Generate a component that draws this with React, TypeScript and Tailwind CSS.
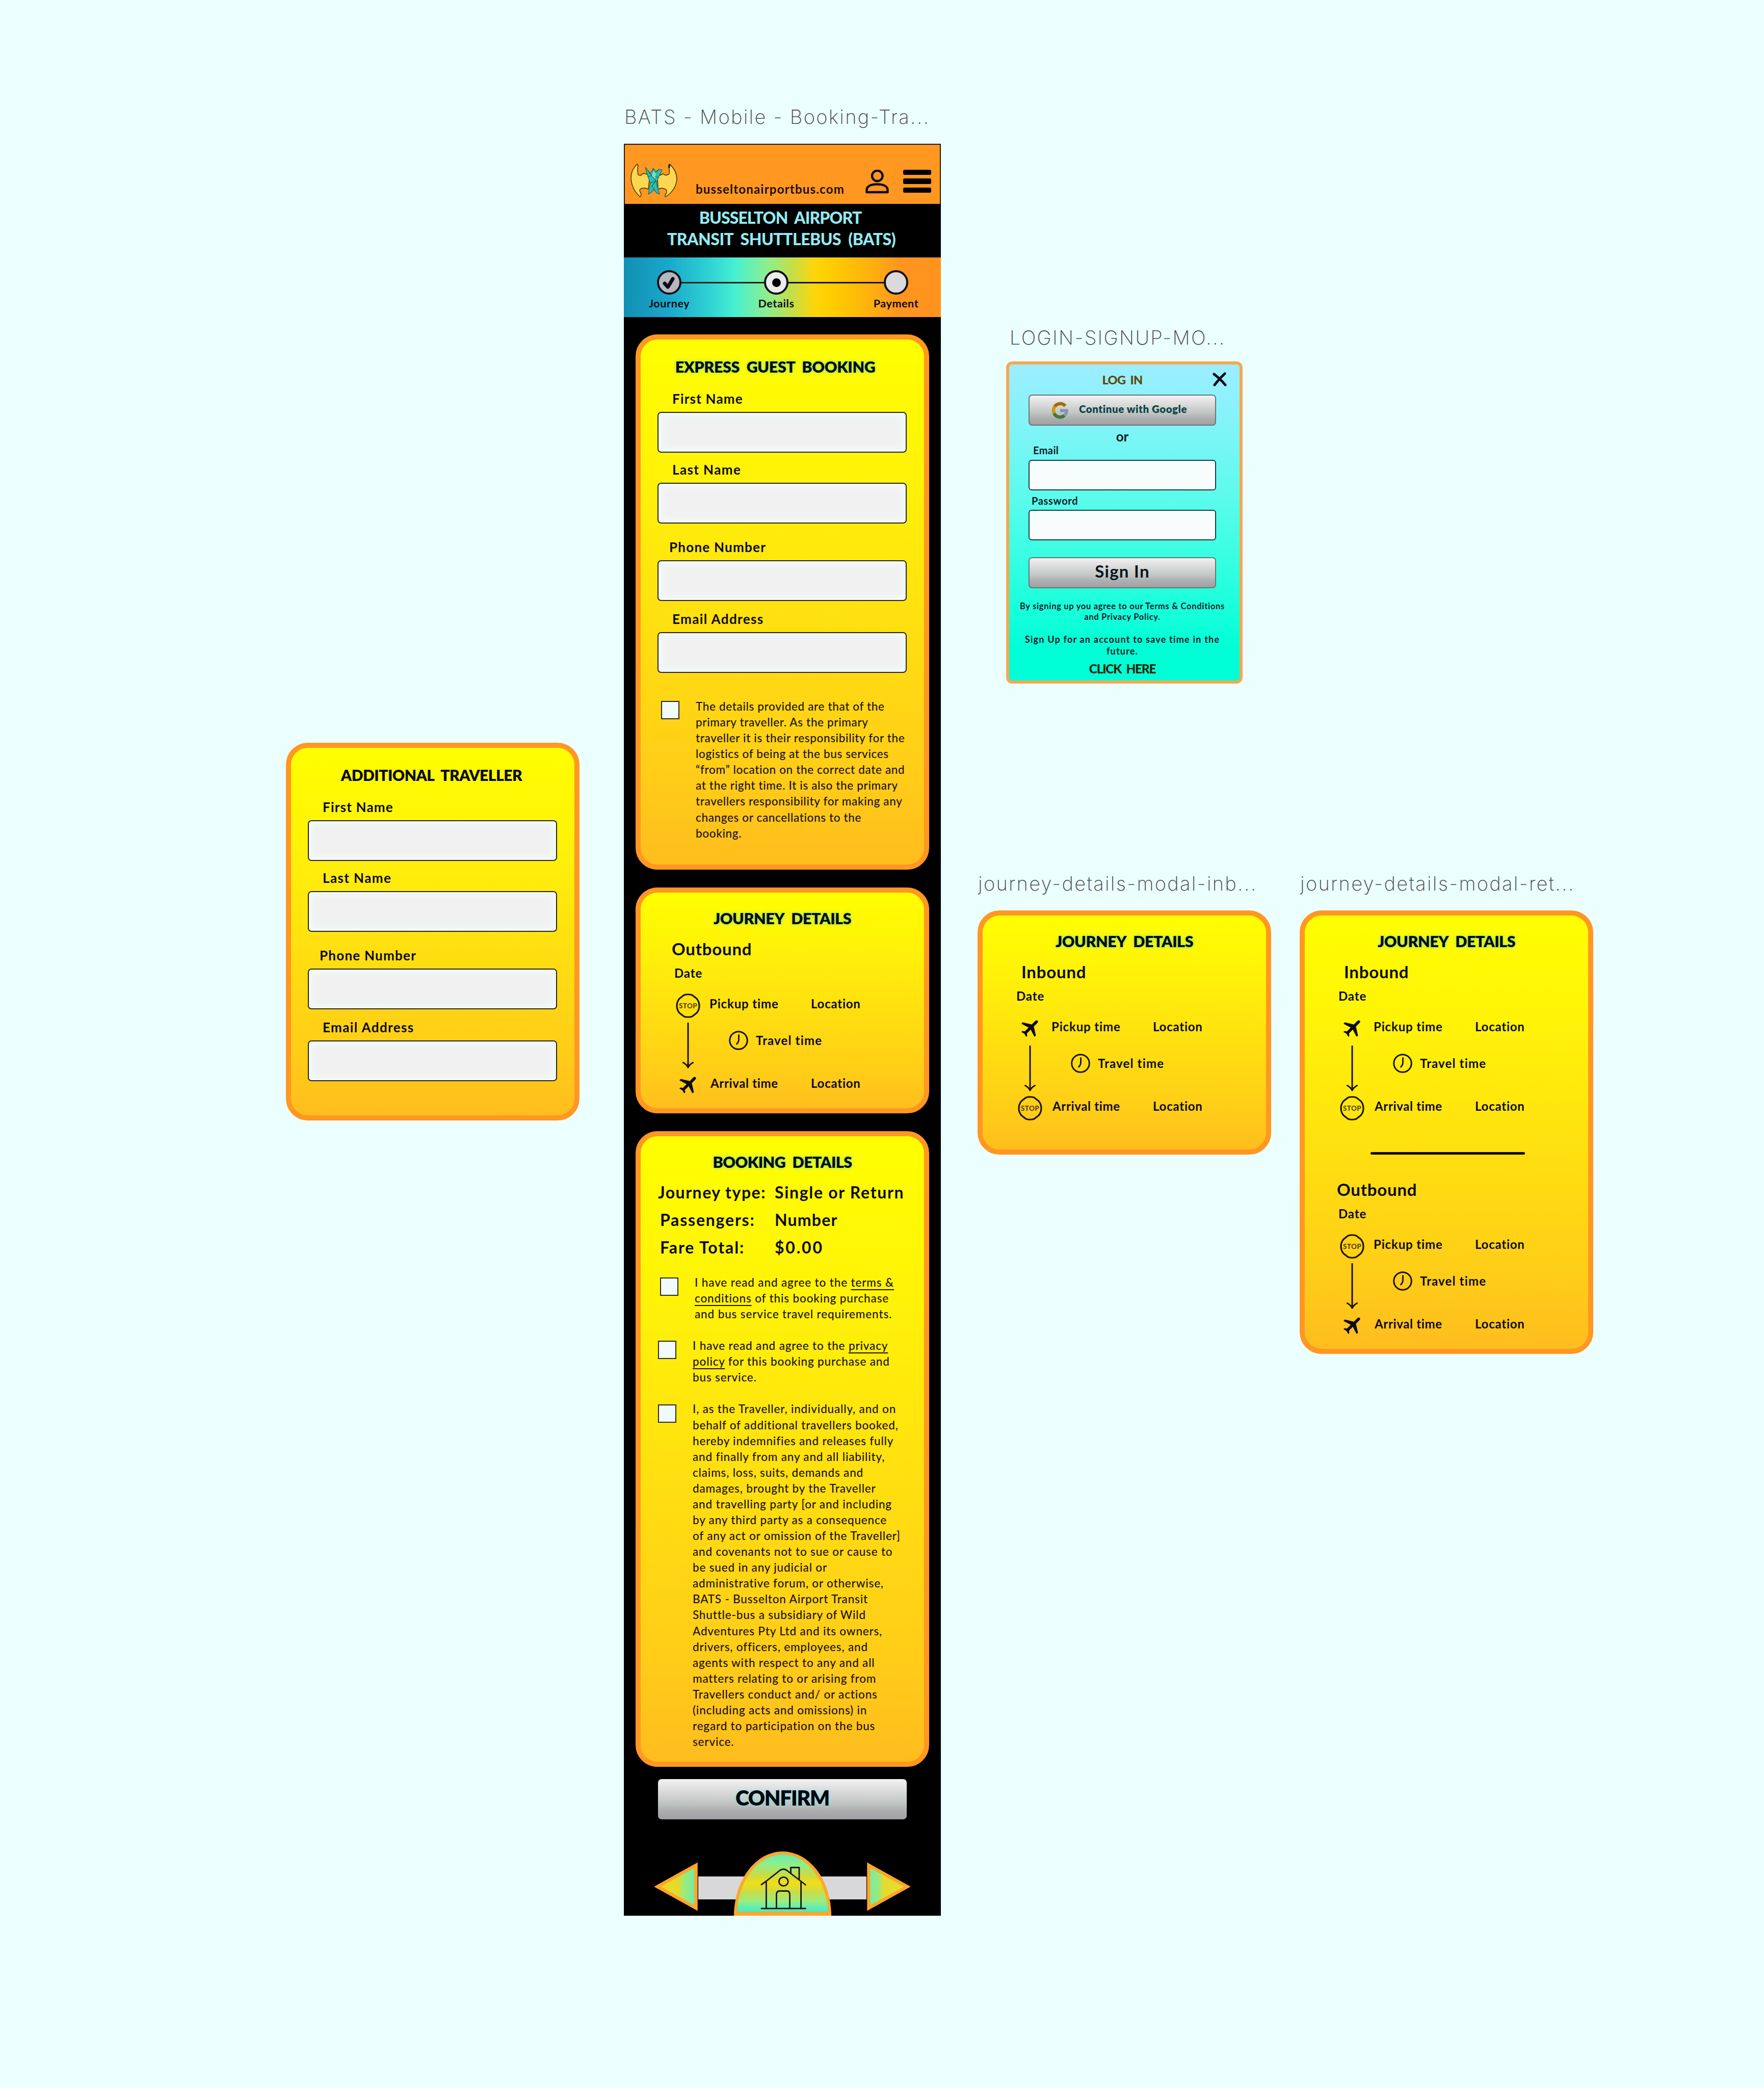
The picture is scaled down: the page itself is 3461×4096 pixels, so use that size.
import type { ReactNode } from "react";

const glow = "[text-shadow:0_0_6px_rgba(60,225,190,0.75)]";

function ArtboardLabel({ className, children }: { className: string; children: ReactNode }) {
  return (
    <div
      className={`absolute whitespace-nowrap font-['Inter',sans-serif] text-[38px] font-extralight leading-[46px] tracking-[2.3px] text-[#4a4a4a] ${className}`}
    >
      {children}
    </div>
  );
}

function YellowCard({ className, children }: { className: string; children: ReactNode }) {
  return (
    <section
      className={`flex w-[576px] flex-col rounded-[43px] border-[10px] border-[#ff9722] bg-[linear-gradient(180deg,#ffff00_0%,#fff308_25%,#ffdf10_55%,#ffcd18_82%,#ffbc1e_100%)] bg-origin-border text-[#0d0a12] ${className}`}
    >
      {children}
    </section>
  );
}

function Field({ label, className, labelClass }: { label: string; className: string; labelClass: string }) {
  return (
    <label className={`flex flex-col ${className}`}>
      <span className={`block h-[30px] whitespace-nowrap text-[26px] font-bold leading-[30px] ${labelClass}`}>{label}</span>
      <span className="mt-[11px] block h-[80px] w-[489px] rounded-[7px] border-2 border-[#2a2420] bg-[#f1f1f1] shadow-[inset_0_0_14px_5px_#f1fdfb]" />
    </label>
  );
}

function TravellerFields() {
  return (
    <div className="mt-[28px] flex flex-col pl-[33px]">
      <Field label="First Name" className="" labelClass="pl-[29px] tracking-[1.2px]" />
      <Field label="Last Name" className="mt-[18px]" labelClass="pl-[29px] tracking-[1.4px]" />
      <Field label="Phone Number" className="mt-[31px]" labelClass="pl-[23px] tracking-[1.25px]" />
      <Field label="Email Address" className="mt-[20px]" labelClass="pl-[29px] tracking-[1.4px]" />
    </div>
  );
}

function Consent({ className, boxClass, textClass, children }: { className: string; boxClass: string; textClass: string; children: ReactNode }) {
  return (
    <div className={`flex items-start ${className}`}>
      <span className={`block size-[36px] shrink-0 border-2 border-[#2a2a2a] bg-[#f0fbfa] ${boxClass}`} />
      <p className={`whitespace-nowrap text-[22.5px] font-medium leading-[31.08px] text-[#1c1206] ${textClass}`}>{children}</p>
    </div>
  );
}

function Lines({ items }: { items: string[] }) {
  return (
    <>
      {items.map((line) => (
        <span key={line} className="block">{line}</span>
      ))}
    </>
  );
}

function StopIcon() {
  return (
    <svg viewBox="0 0 48 48" className="size-[48px]">
      <path d="M16 3 Q24 0.5 32 3 L41 10 Q46 16 46 24 Q46 32 41 38 L32 45 Q24 47.5 16 45 L7 38 Q2 32 2 24 Q2 16 7 10 Z" fill="none" stroke="#1c1408" strokeWidth="3.2" strokeLinejoin="round" />
      <text x="24" y="28.5" textAnchor="middle" fontFamily="Lato, sans-serif" fontWeight="700" fontSize="13.5" letterSpacing="0.4" fill="#4a3404">STOP</text>
    </svg>
  );
}

function PlaneIcon() {
  return (
    <svg viewBox="0 0 24 24" className="size-[46px]">
      <path transform="translate(1 -0.8) rotate(45 12 12)" fill="#0d0a12" d="M21 16v-2l-8-5V3.5c0-.83-.67-1.5-1.5-1.5S10 2.67 10 3.5V9l-8 5v2l8-2.5V19l-2 1.5V22l3.5-1 3.5 1v-1.5L13 19v-5.5l8 2.5z" />
    </svg>
  );
}

function ClockIcon() {
  return (
    <svg viewBox="0 0 38 38" className="-my-[5px] size-[38px]">
      <circle cx="19" cy="19" r="17.3" fill="none" stroke="#1a1208" strokeWidth="3" />
      <path d="M19.5 8.5 V17 Q19.5 22 15.5 26" fill="none" stroke="#1a1208" strokeWidth="2.8" strokeLinecap="round" />
    </svg>
  );
}

function Leg({ direction, headingClass }: { direction: "Inbound" | "Outbound"; headingClass: string }) {
  const inbound = direction === "Inbound";
  return (
    <div className="flex flex-col">
      <h3 className={`h-[38px] text-[33px] font-bold leading-[38px] tracking-[0.8px] ${headingClass}`}>{direction}</h3>
      <p className="mt-[15px] h-[28px] pl-[66px] text-[24px] font-bold leading-[28px] tracking-[0.9px]">Date</p>
      <div className="mt-[26px] flex h-[204px] pl-[69px]">
        <div className="flex w-[48px] flex-col items-center">
          <div className="flex size-[48px] items-center justify-center">{inbound ? <PlaneIcon /> : <StopIcon />}</div>
          <svg viewBox="0 0 22 90" className="my-[9px] h-[90px] w-[22px]">
            <path d="M11 1 V88 M1.5 78.5 Q8 82 11 88 Q14 82 20.5 78.5" fill="none" stroke="#1a1208" strokeWidth="3" strokeLinecap="round" strokeLinejoin="round" />
          </svg>
          <div className="flex size-[48px] items-center justify-center">{inbound ? <StopIcon /> : <PlaneIcon />}</div>
        </div>
        <div className="flex flex-col pl-[18px] pt-[6px] text-[24px] font-bold leading-[28px]">
          <div className="flex">
            <span className="w-[199px] tracking-[0.85px]">Pickup time</span>
            <span className="tracking-[0.75px]">Location</span>
          </div>
          <div className="mt-[43.5px] flex h-[28px] items-center pl-[38px]">
            <ClockIcon />
            <span className="pl-[15px] tracking-[1.15px]">Travel time</span>
          </div>
          <div className="mt-[56px] flex pl-[2px]">
            <span className="w-[197px] tracking-[0.65px]">Arrival time</span>
            <span className="tracking-[0.75px]">Location</span>
          </div>
        </div>
      </div>
    </div>
  );
}

function CardTitle({ children, className }: { children: ReactNode; className: string }) {
  return <h2 className={`h-[40px] whitespace-nowrap text-center font-extrabold leading-[41px] ${className}`}>{children}</h2>;
}

function JourneyTitle() {
  return <CardTitle className={`mb-[21px] text-[30.5px] tracking-[-0.5px] [word-spacing:8px] ${glow}`}>JOURNEY DETAILS</CardTitle>;
}

function BatLogo() {
  return (
    <svg viewBox="0 0 92 66" className="mt-[37px] h-[66px] w-[92px]">
      <g stroke="#3a2808" strokeWidth="1.4" strokeLinejoin="round">
        <path fill="#fbd850" d="M13 1 Q1 12 1 29 Q3 52 19 65 Q22 63 20 57 Q17 54 19 50 Q26 46 35 50 L38 24 Q32 20 25 19 Q20 25 15 22 Q13 12 15 4 Z" />
        <path fill="#fbd850" d="M77 1 Q91 14 91 31 Q89 52 69 65 Q66 63 70 59 Q72 54 70 51 Q63 46 54 50 L53 26 Q58 22 64 20 Q70 25 76 20 Q77 12 75 6 Z" />
      </g>
      <path fill="#2cc0b0" stroke="#17696c" strokeWidth="1.2" strokeLinejoin="round" d="M29 7 L35 14 L38 20 L45 9 L50 16 L56 11 L62 12 L55 27 L51 38 L57 60 L52 58 L46 51 L40 57 L35 60 L37 50 L39 38 L34 25 Z" />
      <path fill="none" stroke="#135d66" strokeWidth="1.2" d="M45 10 L42 24 L50 34 L42 44 L47 51 M34 25 L42 24 L55 27 M39 38 L50 34 M35 14 L42 24 L56 11" />
      <path fill="#7fe0b8" d="M44 14 L42 24 L48 30 L50 19 Z" />
      <path fill="#1a1208" d="M75 1 L78 2 L77 9 L74 8 Z" />
    </svg>
  );
}

function Step({ label, tracking, fill, children }: { label: string; tracking: string; fill: string; children?: ReactNode }) {
  return (
    <div className="flex w-[100px] flex-col items-center pt-[25px]">
      <div className={`flex size-[48px] items-center justify-center rounded-full border-4 border-[#12101a] ${fill}`}>{children}</div>
      <span className={`mt-[4px] text-[21.5px] font-bold leading-[26px] text-[#0d0a12] ${tracking}`}>{label}</span>
    </div>
  );
}

function GoogleIcon() {
  return (
    <svg viewBox="0 0 34 34" className="size-[34px]" fill="none" strokeWidth="6.5">
      <path d="M27 8.5 A13 13 0 0 0 6 10" stroke="#a8690c" />
      <path d="M6.6 9.2 A13 13 0 0 0 5.6 23.5" stroke="#d2940f" />
      <path d="M5.2 22.8 A13 13 0 0 0 25.5 27" stroke="#3f7a3c" />
      <path d="M25 27.4 A13 13 0 0 0 29.8 17.5 H17" stroke="#7f97b0" strokeWidth="6" />
    </svg>
  );
}

function LoginInput() {
  return <span className="mx-[38px] block h-[60px] rounded-[6px] border-2 border-[#1f3c40] bg-[#f8fcfc] shadow-[inset_0_0_12px_4px_#f0ffff]" />;
}

const silver = "bg-[linear-gradient(180deg,#f3f2f3_0%,#d9d9d9_32%,#c2c7c4_58%,#aeafaf_78%,#a09fa4_100%)]";

function LoginModal() {
  return (
    <section className="absolute left-[1974px] top-[709px] flex h-[632px] w-[464px] flex-col rounded-[12px] border-[6px] border-[#f6a850] bg-[linear-gradient(180deg,#9ceeff_0%,#80f4f8_20%,#5cfbec_42%,#30ffe0_65%,#00ffd6_90%,#00ffd4_100%)] pr-[8px] text-[#0b1a24]">
      <svg viewBox="0 0 28 28" className="absolute left-[399px] top-[15px] size-[28px]">
        <path d="M3 4 Q14 12 25 25 M24 3 Q13 13 4 25" fill="none" stroke="#0d0a18" strokeWidth="5" strokeLinecap="round" />
      </svg>
      <h2 className="mt-[14px] h-[30px] text-center text-[23.5px] font-black leading-[32px] tracking-[-0.6px] text-[#5f4708] [word-spacing:4px]">LOG IN</h2>
      <div className={`mx-[38px] mt-[15px] flex h-[61px] items-center rounded-[7px] border-2 border-[#6c7476] pl-[43px] ${silver}`}>
        <GoogleIcon />
        <span className="-mt-[5px] whitespace-nowrap pl-[20px] text-[20.5px] font-extrabold leading-[30px] tracking-[0.55px] text-[#0b4448]">Continue with Google</span>
      </div>
      <p className="mt-[6px] h-[30px] text-center text-[26px] font-bold leading-[30px]">or</p>
      <p className="h-[24px] pl-[47px] text-[20px] font-bold leading-[24px] tracking-[0.4px]">Email</p>
      <span className="h-[7px]" />
      <LoginInput />
      <p className="mt-[8px] h-[24px] pl-[44px] text-[20px] font-bold leading-[24px] tracking-[0.7px]">Password</p>
      <span className="h-[6px]" />
      <LoginInput />
      <div className={`mx-[38px] mt-[33px] flex h-[61px] justify-center rounded-[7px] border-2 border-[#6c7476] text-[33px] font-bold leading-[51px] tracking-[1.3px] text-[#06161c] ${silver}`}>Sign In</div>
      <p className="mt-[25px] whitespace-nowrap text-center text-[16.5px] font-bold leading-[21.4px] tracking-[0.7px]">
        By signing up you agree to our Terms &amp; Conditions
        <br />
        and Privacy Policy.
      </p>
      <p className="mt-[21px] whitespace-nowrap text-center text-[18px] font-bold leading-[23px] tracking-[1.2px]">
        Sign Up for an account to save time in the
        <br />
        future.
      </p>
      <p className="mt-[8px] text-center text-[24.5px] font-black leading-[30px] tracking-[-1.3px] text-[#1c2408] [word-spacing:5px]">CLICK HERE</p>
    </section>
  );
}

function BottomNav() {
  return (
    <nav className="relative mt-auto flex h-[126px] items-start px-[60px] pt-[20px]">
      <svg viewBox="0 0 86 98" className="h-[98px] w-[86px] shrink-0">
        <defs>
          <linearGradient id="navLeft">
            <stop offset="0" stopColor="#b8e070" />
            <stop offset="0.15" stopColor="#f2da1c" />
            <stop offset="0.58" stopColor="#dcdc34" />
            <stop offset="0.64" stopColor="#a6ea70" />
            <stop offset="1" stopColor="#6ceaa8" />
          </linearGradient>
        </defs>
        <path d="M81.5 7 V91 L6 49 Z" fill="url(#navLeft)" stroke="#fda628" strokeWidth="6.5" />
      </svg>
      <span className="mt-[29px] h-[45px] flex-1 bg-[#d8d7da]" />
      <svg viewBox="0 0 86 98" className="h-[98px] w-[86px] shrink-0">
        <defs>
          <linearGradient id="navRight">
            <stop offset="0" stopColor="#72ecaa" />
            <stop offset="0.25" stopColor="#98ea7c" />
            <stop offset="0.4" stopColor="#e6da2c" />
            <stop offset="1" stopColor="#e6dc38" />
          </linearGradient>
        </defs>
        <path d="M4.5 7 V91 L80 49 Z" fill="url(#navRight)" stroke="#fda628" strokeWidth="6.5" />
      </svg>
      <div className="absolute left-[216px] top-0 flex h-[126px] w-[191px] justify-center rounded-[50%_50%_0_0/100%_100%_0_0] border-[6px] border-b-[8px] border-[#fda72c] bg-[linear-gradient(180deg,#66eeb0_0%,#90ee88_18%,#c6dc4a_35%,#f2dd16_50%,#c8dc4a_66%,#98ee80_82%,#44eccc_99%)]">
        <svg viewBox="-2 -2 91 86" className="ml-[4px] mt-[23px] h-[86px] w-[91px]" fill="none" stroke="#15160e" strokeWidth="2.8" strokeLinecap="round" strokeLinejoin="round">
          <path d="M0 34 L9 27.5 L37 5.5 Q43 2 49 5.5 L77.5 27.5 L86.5 34.5" />
          <path d="M9.4 28.5 V80.5 M77.6 28.5 V80.5 M0 80.8 H86.5" />
          <path d="M57.5 12 V0.5 H74 V24" />
          <ellipse cx="43.3" cy="28" rx="9" ry="8.6" />
          <path d="M29.4 80 V54 Q29.4 46.5 35 46.5 H50 Q55.5 46.5 55.5 54 V80" />
        </svg>
      </div>
    </nav>
  );
}

function SummaryRow({ label, value, className, labelClass, valueClass }: { label: string; value: string; className: string; labelClass: string; valueClass: string }) {
  return (
    <div className={`flex h-[36px] whitespace-nowrap text-[32px] font-bold leading-[36px] ${className}`}>
      <span className={labelClass}>{label}</span>
      <span className={valueClass}>{value}</span>
    </div>
  );
}

function BookingArtboard() {
  return (
    <main className="absolute left-[1224px] top-[282px] flex h-[3476px] w-[622px] flex-col bg-black">
      <header className="flex h-[118px] items-start border-2 border-b-0 border-[#2a1804] bg-[#ff9720] pl-[11px]">
        <BatLogo />
        <span className="ml-[36px] mt-[73px] w-[333px] whitespace-nowrap text-[24px] font-bold leading-[28px] tracking-[1.2px] text-[#1a0f06]">busseltonairportbus.com</span>
        <svg viewBox="0 0 46 47" className="mt-[49px] h-[47px] w-[46px]" fill="none" stroke="#0d0a12" strokeWidth="4.4" strokeLinejoin="round">
          <circle cx="23.3" cy="12" r="10.3" />
          <path d="M2.5 44 V40 C2.5 32 11 28.5 23 28.5 S43.5 32 43.5 40 V44 Z" />
        </svg>
        <div className="ml-[28px] mt-[49px] flex w-[55px] flex-col gap-[7px]">
          <span className="h-[10.4px] rounded-[3px] bg-black" />
          <span className="h-[10.4px] rounded-[3px] bg-black" />
          <span className="h-[10.4px] rounded-[3px] bg-black" />
        </div>
      </header>

      <h1 className="h-[105px] whitespace-nowrap pr-[4px] pt-[6px] text-center text-[32px] font-black leading-[42px] text-[#92ebf2] [word-spacing:7px]">
        <span className="block pr-[4px] tracking-[-0.9px]">BUSSELTON AIRPORT</span>
        <span className="block tracking-[-0.5px]">TRANSIT SHUTTLEBUS (BATS)</span>
      </h1>

      <div className="flex h-[117px] items-start bg-[linear-gradient(90deg,#118fb2_0%,#19a8cc_14%,#2fd2d4_27%,#45f0d2_35%,#8cee90_45%,#c4de48_53%,#fcd60a_60%,#ffcc00_66%,#ffb00f_78%,#ff951e_87%,#ff931e_100%)] pl-[39px]">
        <Step label="Journey" tracking="tracking-[0.6px]" fill="bg-[#b4b8bc]">
          <svg viewBox="0 0 30 34" className="h-[34px] w-[30px]">
            <path d="M6 19 L12.5 26 L22 10" fill="none" stroke="#0d0a18" strokeWidth="7" strokeLinecap="round" strokeLinejoin="round" />
          </svg>
        </Step>
        <span className="-mx-[27px] mt-[47.5px] h-[3.5px] w-[164px] bg-[#14261c]" />
        <Step label="Details" tracking="tracking-[0.6px]" fill="bg-[#ececec]">
          <span className="size-[17px] rounded-full bg-black" />
        </Step>
        <span className="-mx-[27px] mt-[47.5px] h-[3.5px] w-[189px] bg-[#1c1404]" />
        <Step label="Payment" tracking="tracking-[0.6px]" fill="bg-[#dadada]" />
      </div>

      <div className="flex flex-col gap-[35px] pl-[23px] pt-[34px]">
        <YellowCard className="h-[1050px] pt-[33px]">
          <CardTitle className={`pr-[28px] text-[30.5px] tracking-[-0.4px] [word-spacing:7px] ${glow}`}>EXPRESS GUEST BOOKING</CardTitle>
          <TravellerFields />
          <Consent className="mt-[50px] pl-[40px]" boxClass="mt-[5px]" textClass="ml-[32px] tracking-[0.65px]">
            <Lines
              items={[
                "The details provided are that of the",
                "primary traveller. As the primary",
                "traveller it is their responsibility for the",
                "logistics of being at the bus services",
                "“from” location on the correct date and",
                "at the right time. It is also the primary",
                "travellers responsibility for making any",
                "changes or cancellations to the",
                "booking.",
              ]}
            />
          </Consent>
        </YellowCard>

        <YellowCard className="h-[443px] pt-[30px]">
          <JourneyTitle />
          <Leg direction="Outbound" headingClass="pl-[61px]" />
        </YellowCard>

        <YellowCard className="h-[1247px] pt-[30px]">
          <CardTitle className={`text-[30.5px] tracking-[-0.6px] [word-spacing:7px] ${glow}`}>BOOKING DETAILS</CardTitle>
          <SummaryRow className="mt-[22px]" label="Journey type:" value="Single or Return" labelClass="w-[263px] pl-[34px] tracking-[1.5px]" valueClass="tracking-[1.7px]" />
          <SummaryRow className="mt-[18px]" label="Passengers:" value="Number" labelClass="w-[263px] pl-[38px] tracking-[1.8px]" valueClass="tracking-[1.2px]" />
          <SummaryRow className="mt-[18px]" label="Fare Total:" value="$0.00" labelClass="w-[263px] pl-[38px] tracking-[1.9px]" valueClass="tracking-[2.8px]" />
          <Consent className="mt-[35px] pl-[38px]" boxClass="mt-[6px]" textClass="ml-[32px] tracking-[0.87px]">
            I have read and agree to the <u className="underline-offset-[5px]">terms &amp;</u>
            <br />
            <u className="underline-offset-[5px]">conditions</u> of this booking purchase
            <br />
            and bus service travel requirements.
          </Consent>
          <Consent className="mt-[31px] pl-[34px]" boxClass="mt-[6px]" textClass="ml-[32px] tracking-[0.85px]">
            I have read and agree to the <u className="underline-offset-[5px]">privacy</u>
            <br />
            <u className="underline-offset-[5px]">policy</u> for this booking purchase and
            <br />
            bus service.
          </Consent>
          <Consent className="mt-[31px] pl-[34px]" boxClass="mt-[7px]" textClass="ml-[32px] tracking-[0.82px]">
            <Lines
              items={[
                "I, as the Traveller, individually, and on",
                "behalf of additional travellers booked,",
                "hereby indemnifies and releases fully",
                "and finally from any and all liability,",
                "claims, loss, suits, demands and",
                "damages, brought by the Traveller",
                "and travelling party [or and including",
                "by any third party as a consequence",
                "of any act or omission of the Traveller]",
                "and covenants not to sue or cause to",
                "be sued in any judicial or",
                "administrative forum, or otherwise,",
                "BATS - Busselton Airport Transit",
                "Shuttle-bus a subsidiary of Wild",
                "Adventures Pty Ltd and its owners,",
                "drivers, officers, employees, and",
                "agents with respect to any and all",
                "matters relating to or arising from",
                "Travellers conduct and/ or actions",
                "(including acts and omissions) in",
                "regard to participation on the bus",
                "service.",
              ]}
            />
          </Consent>
        </YellowCard>
      </div>

      <button className={`mx-[67px] mt-[24px] h-[79px] rounded-[7px] pb-[6px] text-center text-[41px] font-extrabold leading-[71px] tracking-[-1.4px] text-[#07060e] ${silver} [text-shadow:0_0_6px_rgba(120,235,235,0.9)]`}>
        CONFIRM
      </button>
      <BottomNav />
    </main>
  );
}

export default function App() {
  return (
    <div className="relative h-[4096px] w-[3461px] overflow-hidden bg-[#ebffff] font-['Lato',sans-serif]">
      <ArtboardLabel className="left-[1225px] top-[206px]">BATS - Mobile - Booking-Tra...</ArtboardLabel>
      <BookingArtboard />

      <YellowCard className="absolute left-[561px] top-[1457px] h-[741px] pt-[33px]">
        <CardTitle className="pr-[5px] text-[30px] tracking-[-0.5px] [word-spacing:7px]">ADDITIONAL TRAVELLER</CardTitle>
        <TravellerFields />
      </YellowCard>

      <ArtboardLabel className="left-[1981px] top-[639px]">LOGIN-SIGNUP-MO...</ArtboardLabel>
      <LoginModal />

      <ArtboardLabel className="left-[1919px] top-[1710px]">journey-details-modal-inb...</ArtboardLabel>
      <YellowCard className="absolute left-[1918px] top-[1786px] h-[479px] pt-[30px]">
        <JourneyTitle />
        <Leg direction="Inbound" headingClass="pl-[76px]" />
      </YellowCard>

      <ArtboardLabel className="left-[2551px] top-[1710px]">journey-details-modal-ret...</ArtboardLabel>
      <YellowCard className="absolute left-[2550px] top-[1786px] h-[870px] pt-[30px]">
        <JourneyTitle />
        <Leg direction="Inbound" headingClass="pl-[77px]" />
        <hr className="mb-[49px] ml-[129px] mt-[62px] h-[5px] w-[303px] rounded-full border-0 bg-[#0d0a12]" />
        <Leg direction="Outbound" headingClass="pl-[63px]" />
      </YellowCard>
    </div>
  );
}
